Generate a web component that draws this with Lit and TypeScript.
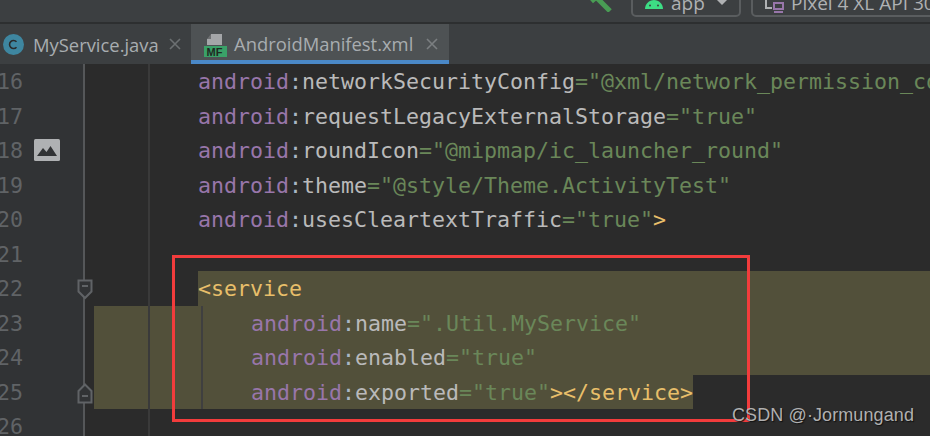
import { LitElement, html, css, svg } from "lit";
import { customElement } from "lit/decorators.js";

type Line = { n: number; kind: "attr" | "none" | "open"; name?: string; value?: string; tail?: string; hl?: string; icon?: boolean; fold?: string };

const LINES: Line[] = [
  { n: 16, kind: "attr", name: "networkSecurityConfig", value: "\"@xml/network_permission_config\"" },
  { n: 17, kind: "attr", name: "requestLegacyExternalStorage", value: "\"true\"" },
  { n: 18, kind: "attr", name: "roundIcon", value: "\"@mipmap/ic_launcher_round\"", icon: true },
  { n: 19, kind: "attr", name: "theme", value: "\"@style/Theme.ActivityTest\"" },
  { n: 20, kind: "attr", name: "usesCleartextTraffic", value: "\"true\"", tail: ">" },
  { n: 21, kind: "none" },
  { n: 22, kind: "open", hl: "first", fold: "down" },
  { n: 23, kind: "attr", name: "name", value: "\".Util.MyService\"", hl: "mid" },
  { n: 24, kind: "attr", name: "enabled", value: "\"true\"", hl: "mid" },
  { n: 25, kind: "attr", name: "exported", value: "\"true\"", tail: "></service>", hl: "last", fold: "up" },
  { n: 26, kind: "none" },
];

@customElement("app-root")
export class AppRoot extends LitElement {
  static styles = css`
    :host { display: block; width: 930px; height: 436px; overflow: hidden; background: #2b2b2b; position: relative; }
    * { box-sizing: border-box; }

    .toolbar { height: 22px; background: #3c3f41; display: flex; align-items: flex-end; padding: 0 0 5px 590px; gap: 10px; overflow: hidden; font: 19px "Open Sans", sans-serif; color: #a9b7c6; }
    .hammer { width: 22px; height: 12px; margin: 0 9px 5px 0; flex: none; }
    .combo { height: 30px; flex: none; border: 2px solid #5a5d5f; border-radius: 5px; display: flex; align-items: flex-end; line-height: 24px; }
    .combo.app { width: 110px; padding-left: 12px; gap: 8px; }
    .combo.device { width: 260px; padding-left: 12px; gap: 6px; }
    .combo span { color: #afb1b3; }
    .combo svg { flex: none; }
    .android { margin-bottom: 3px; }
    .caret { margin: 0 0 8px 3px; }

    .sep { height: 2px; background: #2d2f30; }

    .tabs { height: 40px; background: #3c3f41; display: flex; font: 18.4px "Open Sans", sans-serif; color: #a8adb0; }
    .tab { height: 40px; display: flex; align-items: center; }
    .tab.one { width: 191px; padding-left: 3px; }
    .tab.two { width: 258px; padding-left: 13px; background: #4e5254; border-bottom: 4px solid #4a88c7; padding-top: 3px; }
    .tab .label { margin-left: 9px; white-space: nowrap; }
    .tab.two .label { margin-left: 6px; }
    .manifest { flex: none; margin-top: 3px; }
    .close { width: 12px; height: 12px; margin-left: 10px; flex: none; }
    .tab.two .close { margin-left: 13px; }

    .editor { position: relative; height: 372px; font: 21.6px "DejaVu Sans Mono", monospace; }
    .row { height: 34.5px; display: flex; line-height: 35.5px; white-space: pre; position: relative; }
    .gutter { width: 85px; flex: none; background: #313335; color: #606366; position: relative; overflow: hidden; }
    .num { position: absolute; right: 62px; top: 0; }
    .img { position: absolute; left: 34px; top: 6px; }
    .fold { flex: none; width: 16px; height: 21px; position: absolute; left: 77px; top: 8px; z-index: 2; }
    .body { flex: 1; min-width: 0; display: flex; padding-left: 9px; overflow: hidden; }
    .code { flex: 1; min-width: 0; padding-left: 104px; }
    .hl { background: #52503a; }
    .first { margin-left: 104px; padding-left: 0; }
    .last { flex: none; }
    .in1 { padding-left: 157px; }

    .ns { color: #9876aa; }
    .attr { color: #bababa; }
    .val { color: #6a8759; }
    .tag { color: #e8bf6a; }
    .colon { color: #a9b7c6; }

    .margin { position: absolute; left: 148px; top: 0; bottom: 0; width: 2px; background: #3a3a3a; }
    .guide { position: absolute; left: 201px; top: 242px; height: 103px; width: 2px; background: #3f3f3f; }
    .foldline { position: absolute; left: 83px; top: 0; bottom: 0; width: 2px; background: #555759; z-index: 1; }
    .mark { position: absolute; left: 172px; top: 255px; width: 578px; height: 167px; border: 3px solid #f23c3c; pointer-events: none; }
    .wm { position: absolute; left: 732px; top: 405px; font: 18px "Liberation Sans", sans-serif; letter-spacing: 0.1px; color: #b0b0b0; text-shadow: 1px 1px 1px #111; white-space: nowrap; }
  `;

  private foldIcon(dir: string) {
    const shape = dir === "down" ? "M1.5 1.5H14.5V12.5L8 19L1.5 12.5Z" : "M8 1.5L14.5 8V19.5H1.5V8Z";
    const y = dir === "down" ? 7 : 13;
    return html`<svg class="fold" viewBox="0 0 16 21" fill="none" stroke="#606366" stroke-width="2">
      ${svg`<path d=${shape} fill="#313335"></path><path d="M5 ${y}H11"></path>`}
    </svg>`;
  }

  private content(l: Line) {
    if (l.kind === "none") return "";
    if (l.kind === "open") return html`<span class="tag">&lt;service</span>`;
    return html`<span class="ns">android</span><span class="colon">:</span><span class="attr">${l.name}</span><span class="val">=${l.value}</span>${l.tail ? html`<span class="tag">${l.tail}</span>` : ""}`;
  }

  private renderLine(l: Line) {
    const gutter = html`<div class="gutter"><span class="num">${l.n}</span>${l.icon
      ? html`<svg class="img" width="26" height="22" viewBox="0 0 26 22"><rect width="26" height="22" rx="1.5" fill="#afb1b3"></rect><path d="M3 17L9 9L12.5 13L16.5 7L23 17Z" fill="#313335"></path></svg>`
      : ""}</div>`;
    const cls = l.hl === "first" ? "code hl first" : l.hl === "mid" ? "code hl in1" : l.hl === "last" ? "code hl in1 last" : "code";
    return html`<div class="row">${gutter}<div class="body"><div class=${cls}>${this.content(l)}</div></div>${l.fold ? this.foldIcon(l.fold) : ""}</div>`;
  }

  render() {
    return html`
      <div class="toolbar">
        <svg class="hammer" viewBox="0 0 22 12"><path d="M6 -3L20 11" stroke="#499c54" stroke-width="5" fill="none"></path><path d="M1 1L8 -5" stroke="#499c54" stroke-width="6" fill="none"></path></svg>
        <div class="combo app">
          <svg class="android" width="18" height="12" viewBox="0 0 18 12"><path d="M0 9C0 4 4 0 9 0C14 0 18 4 18 9Z" fill="#3ddc84"></path><circle cx="5" cy="5.5" r="1" fill="#3c3f41"></circle><circle cx="13" cy="5.5" r="1" fill="#3c3f41"></circle></svg>
          <span>app</span>
          <svg class="caret" width="12" height="8" viewBox="0 0 12 8"><path d="M0 0H12L6 6Z" fill="#afb1b3"></path></svg>
        </div>
        <div class="combo device">
          <svg width="20" height="17" viewBox="0 0 20 17" fill="none"><path d="M1 0V10H7" stroke="#afb1b3" stroke-width="2"></path><rect x="9" y="5" width="9" height="6" stroke="#9876aa" stroke-width="2"></rect><path d="M9 14H18" stroke="#9876aa" stroke-width="2"></path></svg>
          <span>Pixel 4 XL API 30</span>
        </div>
      </div>
      <div class="sep"></div>
      <div class="tabs">
        <div class="tab one">
          <svg width="21" height="21" viewBox="0 0 21 21" style="flex:none"><circle cx="10.5" cy="10.5" r="10.5" fill="#3e86a0"></circle><path d="M13.5 7.8A4 4 0 1 0 13.5 13.2" stroke="#2b2b2b" stroke-width="1.6" fill="none"></path></svg>
          <span class="label">MyService.java</span>
          <svg class="close" viewBox="0 0 12 12"><path d="M1 1L11 11M11 1L1 11" stroke="#6c7072" stroke-width="1.6"></path></svg>
        </div>
        <div class="tab two">
          <svg class="manifest" width="24" height="24" viewBox="0 0 24 24">
            <path d="M7 1H18V12H3V6H7Z" fill="#a4a6a8"></path><path d="M7 1V6H3Z" fill="#6e7072"></path>
            <rect x="0" y="13" width="23" height="11" fill="#3aa168"></rect>
            <text x="2.5" y="22.5" font-family="Liberation Sans" font-weight="700" font-size="11" fill="#1f2a22">MF</text>
          </svg>
          <span class="label">AndroidManifest.xml</span>
          <svg class="close" viewBox="0 0 12 12"><path d="M1 1L11 11M11 1L1 11" stroke="#7b7f81" stroke-width="1.6"></path></svg>
        </div>
      </div>
      <div class="editor">
        ${LINES.map((l) => this.renderLine(l))}
        <div class="foldline"></div>
        <div class="margin"></div>
        <div class="guide"></div>
      </div>
      <div class="mark"></div>
      <div class="wm">CSDN @·Jormungand</div>
    `;
  }
}
